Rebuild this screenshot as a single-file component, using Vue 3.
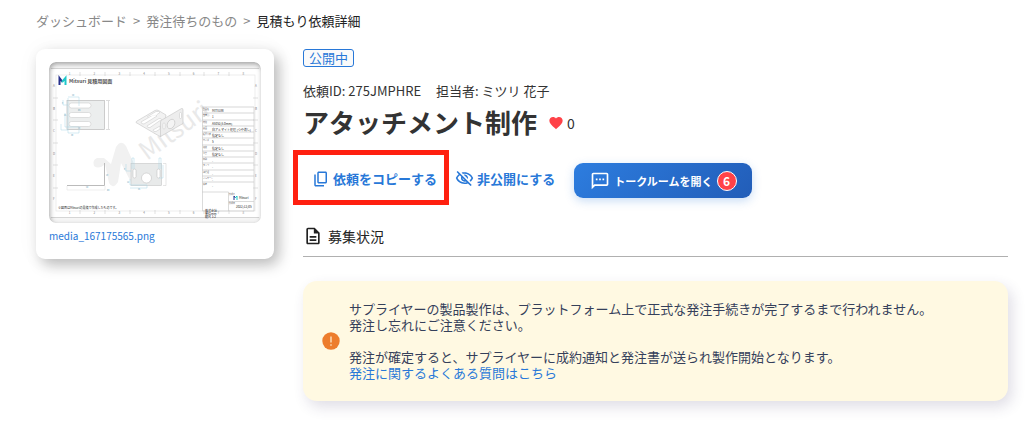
<template>
  <div class="page">
    <nav class="breadcrumb" aria-label="パンくずリスト">
      <a href="#">ダッシュボード</a>
      <span>&gt;</span>
      <a href="#">発注待ちのもの</a>
      <span>&gt;</span>
      <span class="current">見積もり依頼詳細</span>
    </nav>

    <div class="content">
      <aside class="media-card">
        <div class="thumbnail">
          <svg viewBox="49 62 212 161" class="drawing" role="img" aria-label="図面">
            <!-- 図枠 -->
            <rect x="49" y="69" width="212" height="148" fill="#fff" />
            <path d="M51 68.500H259M51 217.500H259" stroke="#d5d5d5" />
            <rect x="56" y="75" width="199" height="136" fill="none" stroke="#e6e6e6" stroke-width="0.700" />
            <path
              v-for="x in columnMarks"
              :key="'c' + x"
              :d="`M${x} 72v4M${x} 210v4`"
              stroke="#ccc"
              stroke-width="0.600"
            />
            <path
              v-for="y in rowMarks"
              :key="'r' + y"
              :d="`M53 ${y}h5M253 ${y}h5`"
              stroke="#ccc"
              stroke-width="0.600"
            />
            <g class="tiny">
              <template v-for="n in 8" :key="'n' + n">
                <text :x="44 + n * 24.800" y="74.500">{{ n }}</text>
                <text :x="44 + n * 24.800" y="214">{{ n }}</text>
              </template>
              <template v-for="(letter, i) in 'ABCDEF'" :key="letter">
                <text x="53" :y="87 + i * 22.500">{{ letter }}</text>
                <text x="255" :y="87 + i * 22.500">{{ letter }}</text>
              </template>
            </g>

            <!-- 透かし -->
            <path
              d="M97 158Q92 160 94 166Q99 170 105 164L109 183Q113 190 118 182L121 163L131 182Q137 189 141 183Q142 180 139 175L126 146Q121 139 116 147L111 164L104 158Z"
              fill="#f1f1f1"
            />
            <text class="watermark" transform="translate(147 161) rotate(-36)">Mitsuri</text>

            <!-- ロゴ -->
            <path d="M59.500 85v-7l3 4" fill="none" stroke="#27308c" stroke-width="2" />
            <path d="M62 82l3.500-4v7" fill="none" stroke="#20c7c9" stroke-width="2" />
            <text x="69" y="83" class="drawing-title">Mitsuri 見積用図面</text>

            <!-- 平面図 -->
            <rect x="67" y="100.500" width="37.500" height="29" fill="#eceeee" stroke="#bbb" stroke-width="0.700" />
            <g fill="#fff" stroke="#c5c5c5" stroke-width="0.500">
              <rect x="69" y="103" width="22" height="5" rx="2.500" />
              <rect x="69" y="112.500" width="22" height="5" rx="2.500" />
              <rect x="69" y="121.500" width="22" height="5" rx="2.500" />
            </g>
            <path
              d="M68 97h11v9M63 100v5h5M68 98v35h11v-4M65 113v14h14M61 124v6h7"
              fill="none"
              stroke="#a9d4e4"
              stroke-width="0.500"
            />
            <path d="M106 100.500h4M106 129.500h4M108.500 101v28" stroke="#bbb" stroke-width="0.500" />
            <g class="dim">
              <text x="72" y="96">60</text>
              <text x="62" y="104">8</text>
              <text x="78" y="111">R4</text>
              <text x="64" y="116">25</text>
              <text x="78" y="129">18</text>
              <text x="71" y="136">30</text>
            </g>

            <!-- 立体図 -->
            <g stroke="#c4c4c4" stroke-width="0.600" stroke-linejoin="round">
              <path d="M136 122.500Q136 121.500 137 121L155 110.500Q157 109.500 158.500 110.500L166 115L161 136.500L159 136Z" fill="#f2f2f2" />
              <path d="M161 120.500L181.500 108.500Q183 108 183 110V123.500L160.500 136.500V122Z" fill="#ededed" />
              <g fill="#fff" stroke-width="0.500">
                <path d="M141 122L153 115Q156 114 157 116L144 124Q141 124 141 122Z" />
                <path d="M147 126L159 118.500Q161 118 161.500 119.500L150 127.500Q147 128 147 126Z" />
                <path d="M153 130L160 126V129L156 131.500Q153 132 153 130Z" />
                <path d="M147 117L156 111.500Q159 111 160 112.500L157 114.500" />
                <rect x="179.500" y="112.500" width="2" height="6" rx="1" />
                <rect x="163" y="123" width="2" height="6" rx="1" />
              </g>
              <ellipse cx="171" cy="124" rx="3.500" ry="5" fill="#f4f4f4" transform="rotate(28 171 124)" />
            </g>

            <!-- 側面図 -->
            <path d="M67 185.500h37.500V163" fill="none" stroke="#bbb" stroke-width="1" />
            <path d="M67 186v4h38v-4" fill="none" stroke="#ddd" stroke-width="0.500" />

            <!-- 正面図 -->
            <rect x="131" y="163.500" width="30.500" height="22" fill="#e8eaea" stroke="#c5c5c5" stroke-width="0.600" />
            <circle cx="146.500" cy="178" r="5" fill="#fff" stroke="#bbb" stroke-width="0.500" />
            <rect x="133" y="169" width="3" height="9" rx="1.500" fill="#fff" stroke="#bbb" stroke-width="0.500" />
            <rect x="157" y="169" width="3" height="9" rx="1.500" fill="#fff" stroke="#bbb" stroke-width="0.500" />
            <path
              d="M132 169v-11h2v11M126 164v7h5M130 179v6h17v3h-17M159 169v-11h2v11M163 165v13h-4"
              fill="none"
              stroke="#a9d4e4"
              stroke-width="0.500"
            />
            <path d="M163 163.500h3v22h-3" fill="none" stroke="#ccc" stroke-width="0.500" />
            <g class="dim">
              <text x="106" y="176">18</text>
              <text x="86" y="188">60</text>
              <text x="107" y="191">R2</text>
              <text x="124" y="170">8</text>
              <text x="127" y="183">12</text>
              <text x="138" y="190">25</text>
            </g>

            <!-- 仕様欄 -->
            <path
              v-for="row in specRows"
              :key="row.y"
              :d="`M202 ${row.y}h52`"
              stroke="#c5c5c5"
              stroke-width="0.700"
            />
            <path
              d="M202.500 107V211H254V107M228.500 211V192H202M228.500 201.500H254"
              fill="none"
              stroke="#ccc"
              stroke-width="0.700"
            />
            <g class="spec">
              <template v-for="row in specRows" :key="'t' + row.y">
                <text x="203" :y="row.y + 2.500">{{ row.label }}</text>
                <text x="212" :y="row.y + 4.500" class="spec-value">{{ row.value }}</text>
              </template>
              <text x="229" y="195">作成者</text>
              <text x="229" y="204">作成日</text>
              <text x="236" y="208" class="spec-value">2022/12/05</text>
              <text x="239" y="199" class="spec-value">Mitsuri</text>
              <text x="205" y="212" class="spec-value">株式会社</text>
              <text x="205" y="215" class="spec-value">単位mm</text>
              <text x="205" y="218" class="spec-value">縮尺 1:2</text>
            </g>
            <path d="M234 200v-4l1.500 2" fill="none" stroke="#27308c" />
            <path d="M235 198l2-2v4" fill="none" stroke="#20c7c9" />
            <text x="58" y="209" class="footnote">※図面はMitsuriの見積で作成したものです。</text>
          </svg>
        </div>
        <a href="#" class="file-name">media_167175565.png</a>
      </aside>

      <main class="detail">
        <span class="status">公開中</span>
        <div class="meta">
          <span>依頼ID: 275JMPHRE</span>
          <span>担当者: ミツリ 花子</span>
        </div>
        <div class="title-row">
          <h1>アタッチメント制作</h1>
          <button type="button" class="like" aria-label="お気に入り" @click="toggleLike">
            <svg viewBox="0 0 24 24" width="16" height="16">
              <path
                fill="#ff4248"
                d="M12 21.350l-1.450-1.320C5.400 15.360 2 12.280 2 8.500 2 5.420 4.420 3 7.500 3c1.740 0 3.410.810 4.500 2.090C13.090 3.810 14.760 3 16.500 3 19.580 3 22 5.420 22 8.500c0 3.780-3.400 6.860-8.550 11.540L12 21.350z"
              />
            </svg>
            <span>{{ likes }}</span>
          </button>
        </div>

        <div class="actions">
          <button type="button" class="text-button copy">
            <svg viewBox="0 0 24 24" width="18" height="18">
              <path
                fill="currentColor"
                d="M18 2H9c-1.100 0-2 .900-2 2v12c0 1.100.900 2 2 2h9c1.100 0 2-.900 2-2V4c0-1.100-.900-2-2-2zm0 14H9V4h9v12zM3 6h2v14h11v2H5c-1.100 0-2-.900-2-2V6z"
              />
            </svg>
            依頼をコピーする
          </button>
          <button type="button" class="text-button">
            <svg viewBox="0 0 24 24" width="19" height="19">
              <path
                fill="currentColor"
                d="M12 6c3.790 0 7.170 2.130 8.820 5.500-.590 1.220-1.420 2.270-2.410 3.120l1.410 1.410c1.390-1.230 2.490-2.770 3.180-4.530C21.270 7.110 17 4 12 4c-1.270 0-2.490.200-3.640.570l1.650 1.650C10.660 6.090 11.320 6 12 6zm-1.070 1.140L13 9.210c.570.250 1.030.710 1.280 1.280l2.070 2.070c.080-.340.140-.700.140-1.070C16.500 9.010 14.480 7 12 7c-.370 0-.720.050-1.070.140zM2.010 3.870l2.680 2.680C3.060 7.830 1.770 9.530 1 11.500 2.730 15.890 7 19 12 19c1.520 0 2.980-.290 4.320-.820l3.420 3.420 1.410-1.410L3.420 2.450 2.010 3.870zm7.500 7.500l2.610 2.610c-.040.010-.080.020-.120.020-1.380 0-2.500-1.120-2.500-2.500 0-.050.010-.080.010-.130zm-3.400-3.400l1.750 1.750c-.230.550-.360 1.150-.360 1.780 0 2.480 2.020 4.500 4.500 4.500.630 0 1.230-.130 1.770-.360l.980.980c-.880.240-1.800.380-2.750.380-3.790 0-7.170-2.130-8.820-5.500.700-1.430 1.720-2.610 2.930-3.530z"
              />
            </svg>
            非公開にする
          </button>
          <button type="button" class="talk">
            <svg viewBox="0 0 24 24" width="20" height="20">
              <path
                fill="currentColor"
                d="M20 2H4c-1.100 0-1.990.900-1.990 2L2 22l4-4h14c1.100 0 2-.900 2-2V4c0-1.100-.900-2-2-2zm0 14H5.170L4 17.170V4h16v12zM7 9h2v2H7zm4 0h2v2h-2zm4 0h2v2h-2z"
              />
            </svg>
            <span>トークルームを開く</span>
            <span class="count">{{ unread }}</span>
          </button>
        </div>

        <h2 class="section-title">
          <svg viewBox="0 0 24 24" width="20" height="20">
            <path
              fill="currentColor"
              d="M8 16h8v2H8zm0-4h8v2H8zm6-10H6c-1.100 0-2 .900-2 2v16c0 1.100.890 2 1.990 2H18c1.100 0 2-.900 2-2V8l-6-6zm4 18H6V4h7v5h5v11z"
            />
          </svg>
          募集状況
        </h2>

        <section class="notice">
          <svg viewBox="0 0 18 18" width="18" height="18" class="notice-icon">
            <circle cx="9" cy="9" r="8.700" fill="#ed7d2d" />
            <path d="M9 4.500v6" stroke="#fff4d8" stroke-width="1.200" />
            <circle cx="9" cy="13" r="0.800" fill="#fff4d8" />
          </svg>
          <div>
            <p>
              サプライヤーの製品製作は、プラットフォーム上で正式な発注手続きが完了するまで行われません。<br />
              発注し忘れにご注意ください。
            </p>
            <p>
              発注が確定すると、サプライヤーに成約通知と発注書が送られ製作開始となります。<br />
              <a href="#">発注に関するよくある質問はこちら</a>
            </p>
          </div>
        </section>
      </main>
    </div>
  </div>
</template>

<script setup>
import { ref } from 'vue'

const likes = ref(0)
const unread = ref(6)

const columnMarks = [80, 105, 130, 155, 180, 204, 229]
const rowMarks = [98, 120, 143, 165, 188]

const specRows = [
  { y: 107, label: '製品名', value: 'MITSURI' },
  { y: 113, label: '数量', value: '1' },
  { y: 120, label: '材質', value: 'A5052(5.0mm)' },
  { y: 126, label: '表面', value: '白アルマイト処理 (つや消し)' },
  { y: 132, label: '板厚公差', value: '指定なし' },
  { y: 138, label: 'サイズ', value: '5' },
  { y: 145, label: '溶接', value: '指定なし' },
  { y: 151, label: '塗装', value: '指定なし' },
  { y: 157, label: '印刷', value: '-' },
  { y: 163, label: 'タップ', value: '-' },
  { y: 170, label: '熱処理', value: '-' },
  { y: 176, label: 'インサート', value: '-' },
  { y: 182, label: '備考', value: '-' }
]

function toggleLike() {
  likes.value = likes.value ? 0 : 1
}
</script>

<style>
body {
  margin: 0;
  background: #fff;
}
</style>

<style scoped>
.page {
  padding: 11px 21px 20px 36px;
  font-family: "Noto Sans CJK JP", sans-serif;
  font-size: 13px;
  color: #333;
}
a {
  color: #2878d8;
  text-decoration: none;
}
button {
  font-family: inherit;
  border: none;
  background: none;
  padding: 0;
  cursor: pointer;
}
svg {
  flex-shrink: 0;
}
.breadcrumb {
  display: flex;
  gap: 6px;
  line-height: 20px;
  color: #888;
}
.breadcrumb a {
  color: #888;
}
.breadcrumb .current {
  color: #222;
}
.content {
  display: flex;
  align-items: flex-start;
  gap: 29px;
  margin-top: 18px;
}
.media-card {
  box-sizing: border-box;
  flex: 0 0 238px;
  padding: 13px 13px 15px;
  border-radius: 9px;
  background: #fff;
  box-shadow: 5px 6px 14px rgba(0, 0, 0, 0.25), 0 0 24px rgba(0, 0, 0, 0.04);
}
.thumbnail {
  position: relative;
  border-radius: 7px;
  overflow: hidden;
  background: #f6f6f6;
}
.thumbnail::after {
  content: "";
  position: absolute;
  inset: 0;
  border-radius: 7px;
  box-shadow: inset 1px 2px 5px rgba(0, 0, 0, 0.35);
}
.drawing {
  display: block;
  width: 100%;
}
.drawing .tiny {
  font-size: 3px;
  fill: #888;
}
.drawing .dim {
  font-size: 2px;
  fill: #5799b5;
}
.drawing .spec {
  font-size: 2px;
  fill: #555;
}
.drawing .spec-value {
  font-size: 3px;
  fill: #222;
}
.drawing .footnote {
  font-size: 3px;
  fill: #222;
}
.drawing .drawing-title {
  font-size: 5px;
  font-weight: bold;
  fill: #555;
}
.drawing .watermark {
  font-size: 25px;
  fill: #e9e9e9;
}
.file-name {
  display: block;
  margin-top: 5px;
  font-size: 10px;
  line-height: 16px;
}
.detail {
  flex: 1;
  min-width: 0;
}
.status {
  display: block;
  box-sizing: border-box;
  width: fit-content;
  padding: 0 5px;
  border: 1px solid #2878d8;
  border-radius: 3px;
  background: #fafafa;
  color: #2878d8;
  line-height: 16px;
}
.meta {
  display: flex;
  gap: 15px;
  margin-top: 14px;
  line-height: 20px;
}
.title-row {
  display: flex;
  align-items: center;
  gap: 11px;
  margin-top: 3px;
}
h1 {
  margin: 0;
  font-size: 26px;
  line-height: 36px;
}
.like {
  display: flex;
  align-items: center;
  gap: 3px;
  padding-top: 2px;
  color: #333;
  font-size: 14px;
  line-height: 20px;
}
.actions {
  display: flex;
  gap: 8px;
  margin-top: 23px;
}
.text-button {
  display: flex;
  align-items: center;
  gap: 3px;
  padding-bottom: 4px;
  color: #2878d8;
  font-size: 13px;
  font-weight: bold;
}
.copy {
  position: relative;
  padding: 0 10px 4px 9px;
}
/* 注目させたい操作を囲む枠 */
.copy::after {
  content: "";
  position: absolute;
  inset: -13px -2px -7px -10px;
  border: 5px solid #ff2010;
}
.talk {
  display: flex;
  align-items: center;
  gap: 4px;
  height: 35px;
  margin-left: 11px;
  padding: 0 15px 0 16px;
  border-radius: 9px;
  background: linear-gradient(135deg, #2d7ddf, #225db8);
  box-shadow: 0 3px 10px rgba(40, 120, 216, 0.25);
  color: #fff;
  font-size: 11px;
  font-weight: bold;
}
.count {
  box-sizing: border-box;
  width: 20px;
  height: 20px;
  border: 1px solid #fff;
  border-radius: 50%;
  background: #ff4248;
  font-size: 12px;
  line-height: 18px;
  text-align: center;
}
.section-title {
  display: flex;
  align-items: center;
  gap: 5px;
  margin: 23px 0 0;
  padding-bottom: 5px;
  border-bottom: 1px solid #b0b0b0;
  font-size: 14px;
  font-weight: normal;
  line-height: 30px;
  color: #222;
}
.notice {
  display: flex;
  align-items: center;
  gap: 9px;
  margin-top: 24px;
  padding: 20px 19px;
  border-radius: 14px;
  background: #fff9e2;
  box-shadow: 4px 6px 14px rgba(60, 50, 100, 0.16);
  color: #35405a;
  line-height: 16px;
}
.notice p {
  margin: 0;
}
.notice p + p {
  margin-top: 16px;
}
</style>
